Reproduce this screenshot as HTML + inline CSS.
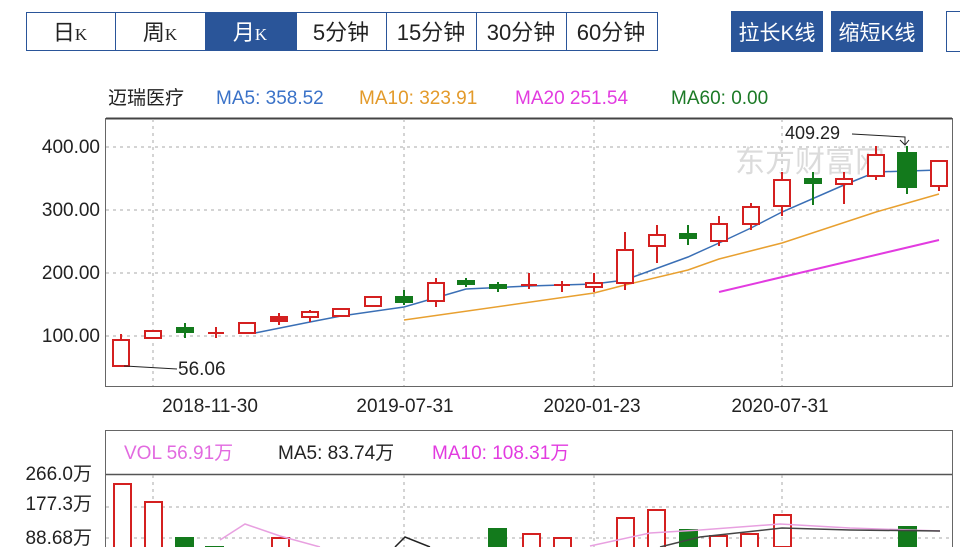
<!DOCTYPE html>
<html><head><meta charset="utf-8"><style>
body{margin:0;width:960px;height:547px;overflow:hidden;background:#fff;font-family:"Liberation Sans","Noto Sans CJK SC",sans-serif}
svg{position:absolute;left:0;top:0}
</style></head><body>
<svg width="960" height="547" xmlns="http://www.w3.org/2000/svg" font-family="Liberation Sans, Noto Sans CJK SC, sans-serif">
<!-- tabs -->
<rect x="26.5" y="12.5" width="631" height="38" fill="#fff" stroke="#2a5599"/>
<rect x="205" y="12" width="91" height="39" fill="#2a5599"/>
<g stroke="#2a5599"><line x1="115.5" y1="12" x2="115.5" y2="51"/><line x1="296.5" y1="12" x2="296.5" y2="51"/><line x1="386.5" y1="12" x2="386.5" y2="51"/><line x1="476.5" y1="12" x2="476.5" y2="51"/><line x1="566.5" y1="12" x2="566.5" y2="51"/></g>
<g font-size="22" text-anchor="middle" fill="#222">
<text x="70" y="40">日<tspan font-family="Liberation Serif" font-size="17">K</tspan></text>
<text x="160" y="40">周<tspan font-family="Liberation Serif" font-size="17">K</tspan></text>
<text x="250" y="40" fill="#fff">月<tspan font-family="Liberation Serif" font-size="17">K</tspan></text>
<text x="341" y="40">5分钟</text><text x="431" y="40">15分钟</text><text x="521" y="40">30分钟</text><text x="611" y="40">60分钟</text>
</g>
<rect x="731" y="11" width="92" height="41" fill="#2a5599"/>
<rect x="831" y="11" width="92" height="41" fill="#2a5599"/>
<rect x="946.5" y="11.5" width="20" height="40" fill="#fff" stroke="#2a5599"/>
<g font-size="21" fill="#fff" text-anchor="middle"><text x="777" y="40">拉长K线</text><text x="877" y="40">缩短K线</text></g>
<!-- legend -->
<g font-size="19"><text x="108" y="104" fill="#222">迈瑞医疗</text><text x="216" y="104" fill="#3a72c8">MA5: 358.52</text><text x="359" y="104" fill="#e39a2a">MA10: 323.91</text><text x="515" y="104" fill="#e23be0">MA20  251.54</text><text x="671" y="104" fill="#1c7a26">MA60: 0.00</text></g>
<!-- chart box -->
<rect x="105.5" y="118.5" width="847" height="268" fill="#fff" stroke="#666"/>
<line x1="106" y1="118.5" x2="952" y2="118.5" stroke="#444" stroke-width="2"/>
<g stroke="#aaa" stroke-dasharray="3,4"><line x1="106" y1="147" x2="952" y2="147"/><line x1="106" y1="210" x2="952" y2="210"/><line x1="106" y1="273" x2="952" y2="273"/><line x1="106" y1="336" x2="952" y2="336"/>
<line x1="153" y1="119" x2="153" y2="386"/><line x1="404" y1="119" x2="404" y2="386"/><line x1="594" y1="119" x2="594" y2="386"/><line x1="782" y1="119" x2="782" y2="386"/></g>
<g font-size="19" fill="#222" text-anchor="end"><text x="100" y="153">400.00</text><text x="100" y="216">300.00</text><text x="100" y="279">200.00</text><text x="100" y="342">100.00</text></g>
<g font-size="19" fill="#222" text-anchor="middle"><text x="210" y="412">2018-11-30</text><text x="405" y="412">2019-07-31</text><text x="592" y="412">2020-01-23</text><text x="780" y="412">2020-07-31</text></g>
<text x="735" y="172" font-size="30" fill="#ccc" opacity="0.7">东方财富网</text>
<!-- MAs -->
<polyline fill="none" stroke="#3a6fb5" stroke-width="1.5" points="255,333 310,322 341,316 404,307 466,289 529,286 594,284 625,280 688,257 719,243 751,228 782,212 844,185 876,172 939,170"/>
<polyline fill="none" stroke="#e8a030" stroke-width="1.5" points="404,320 594,293 625,285 688,270 719,259 782,243 876,212 939,194"/>
<polyline fill="none" stroke="#e23be0" stroke-width="2" points="719,292 939,240"/>
<!-- candles -->
<g stroke="#d42020" stroke-width="2" fill="#fff">
<line x1="121" y1="334" x2="121" y2="366"/><rect x="113" y="340" width="16" height="26"/>
<rect x="145" y="331" width="16" height="7"/>
<line x1="216" y1="327" x2="216" y2="338"/><line x1="208" y1="333" x2="224" y2="333"/>
<rect x="239" y="323" width="16" height="10"/>
<line x1="279" y1="313" x2="279" y2="325"/><rect x="271" y="317" width="16" height="4" fill="#d42020"/>
<line x1="310" y1="310" x2="310" y2="322"/><rect x="302" y="312" width="16" height="5"/>
<rect x="333" y="309" width="16" height="7"/>
<rect x="365" y="297" width="16" height="9"/>
<line x1="436" y1="278" x2="436" y2="307"/><rect x="428" y="283" width="16" height="18"/>
<line x1="529" y1="273" x2="529" y2="289"/><line x1="521" y1="285" x2="537" y2="285"/>
<line x1="562" y1="281" x2="562" y2="292"/><line x1="554" y1="285" x2="570" y2="285"/>
<line x1="594" y1="273" x2="594" y2="292"/><rect x="586" y="283" width="16" height="4"/>
<line x1="625" y1="232" x2="625" y2="290"/><rect x="617" y="250" width="16" height="33"/>
<line x1="657" y1="225" x2="657" y2="263"/><rect x="649" y="235" width="16" height="11"/>
<line x1="719" y1="216" x2="719" y2="246"/><rect x="711" y="224" width="16" height="17"/>
<line x1="751" y1="203" x2="751" y2="230"/><rect x="743" y="207" width="16" height="17"/>
<line x1="782" y1="172" x2="782" y2="216"/><rect x="774" y="180" width="16" height="26"/>
<line x1="844" y1="172" x2="844" y2="204"/><rect x="836" y="179" width="16" height="5"/>
<line x1="876" y1="146" x2="876" y2="180"/><rect x="868" y="155" width="16" height="21"/>
<line x1="939" y1="160" x2="939" y2="191"/><rect x="931" y="161" width="16" height="25"/>
</g>
<g stroke="#137a1c" stroke-width="2" fill="#137a1c">
<line x1="185" y1="323" x2="185" y2="338"/><rect x="177" y="328" width="16" height="4"/>
<line x1="404" y1="290" x2="404" y2="305"/><rect x="396" y="297" width="16" height="5"/>
<line x1="466" y1="278" x2="466" y2="287"/><rect x="458" y="281" width="16" height="3"/>
<line x1="498" y1="282" x2="498" y2="292"/><rect x="490" y="285" width="16" height="3"/>
<line x1="688" y1="225" x2="688" y2="245"/><rect x="680" y="234" width="16" height="4"/>
<line x1="813" y1="172" x2="813" y2="205"/><rect x="805" y="179" width="16" height="4"/>
<line x1="907" y1="146" x2="907" y2="194"/><rect x="898" y="153" width="18" height="34"/>
</g>
<text x="785" y="139" font-size="18" fill="#222">409.29</text>
<polyline points="852,134 905,137 905,144" fill="none" stroke="#222"/>
<polyline points="900,140 905,145 909,140" fill="none" stroke="#222"/>
<text x="178" y="375" font-size="19" fill="#222">56.06</text>
<line x1="177" y1="369" x2="124" y2="366" stroke="#222"/>
<!-- volume -->
<rect x="105.5" y="430.5" width="847" height="130" fill="#fff" stroke="#666"/>
<line x1="106" y1="474.5" x2="952" y2="474.5" stroke="#555" stroke-width="1.5"/>
<g font-size="19"><text x="124" y="459" fill="#e26ae0">VOL  56.91万</text><text x="278" y="459" fill="#222">MA5: 83.74万</text><text x="432" y="459" fill="#e23be0">MA10: 108.31万</text></g>
<g font-size="19" fill="#222" text-anchor="end"><text x="92" y="480">266.0万</text><text x="92" y="510">177.3万</text><text x="92" y="544">88.68万</text></g>
<g stroke="#aaa" stroke-dasharray="3,4"><line x1="106" y1="507" x2="952" y2="507"/><line x1="106" y1="538" x2="952" y2="538"/><line x1="153" y1="475" x2="153" y2="547"/><line x1="404" y1="475" x2="404" y2="547"/><line x1="594" y1="475" x2="594" y2="547"/><line x1="782" y1="475" x2="782" y2="547"/></g>
<g stroke="#d42020" stroke-width="2" fill="#fff">
<rect x="114" y="484" width="17" height="70"/><rect x="145" y="502" width="17" height="50"/>
<rect x="272" y="538" width="17" height="12"/><rect x="523" y="534" width="17" height="15"/><rect x="554" y="538" width="17" height="12"/>
<rect x="617" y="518" width="17" height="30"/><rect x="648" y="510" width="17" height="40"/>
<rect x="710" y="536" width="17" height="12"/><rect x="741" y="534" width="17" height="14"/><rect x="774" y="515" width="17" height="32"/>
</g>
<g fill="#137a1c"><rect x="175" y="537" width="19" height="12"/><rect x="205" y="546" width="19" height="4"/><rect x="488" y="528" width="19" height="20"/><rect x="679" y="529" width="19" height="20"/><rect x="898" y="526" width="19" height="22"/></g>
<polyline fill="none" stroke="#e8a0e0" stroke-width="1.5" points="220,540 245,524 280,536 320,547"/>
<polyline fill="none" stroke="#222" stroke-width="1.5" points="395,547 405,537 430,547"/>
<polyline fill="none" stroke="#e8a0e0" stroke-width="1.5" points="590,546 650,533 700,530 780,524 850,528 940,531"/>
<polyline fill="none" stroke="#444" stroke-width="1.5" points="660,547 700,537 782,528 850,530 940,531"/>
</svg>
</body></html>
